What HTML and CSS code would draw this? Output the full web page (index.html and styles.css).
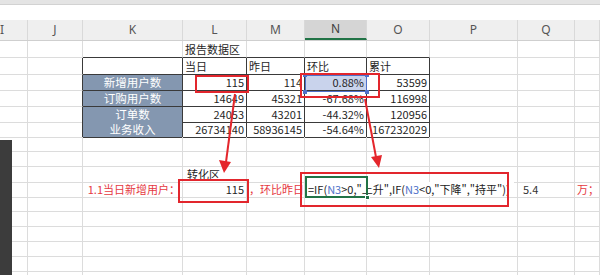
FILE: index.html
```html
<!DOCTYPE html>
<html lang="zh-CN">
<head>
<meta charset="utf-8">
<title>报告数据区</title>
<link rel="stylesheet" href="styles.css">
</head>
<body>
<div class="app">
  <div class="ribbon"></div>
  <div class="fbar"></div>
  <div class="sheet">
    <div class="row hdr">
      <div class="c h hi">I</div><div class="c h">J</div><div class="c h">K</div><div class="c h">L</div><div class="c h">M</div><div class="c h on">N</div><div class="c h">O</div><div class="c h">P</div><div class="c h">Q</div><div class="c h"></div>
    </div>
    <div class="row r17">
      <div class="c"></div><div class="c"></div><div class="c tt"></div><div class="c tt">报告数据区</div><div class="c tt"></div><div class="c tt"></div><div class="c tt"></div><div class="c"></div><div class="c"></div><div class="c"></div>
    </div>
    <div class="row r17">
      <div class="c"></div><div class="c tl"></div><div class="c t"></div><div class="c t">当日</div><div class="c t">昨日</div><div class="c t">环比</div><div class="c t">累计</div><div class="c"></div><div class="c"></div><div class="c"></div>
    </div>
    <div class="row r16">
      <div class="c"></div><div class="c tl"></div><div class="c t lab">新增用户数</div><div class="c t n">115</div><div class="c t n">114</div><div class="c t n sel">0.88%</div><div class="c t n">53599</div><div class="c"></div><div class="c"></div><div class="c"></div>
    </div>
    <div class="row r16">
      <div class="c"></div><div class="c tl"></div><div class="c t lab">订购用户数</div><div class="c t n">14649</div><div class="c t n">45321</div><div class="c t n">-67.68%</div><div class="c t n">116998</div><div class="c"></div><div class="c"></div><div class="c"></div>
    </div>
    <div class="row r15">
      <div class="c"></div><div class="c tl"></div><div class="c t lab">订单数</div><div class="c t n">24053</div><div class="c t n">43201</div><div class="c t n">-44.32%</div><div class="c t n">120956</div><div class="c"></div><div class="c"></div><div class="c"></div>
    </div>
    <div class="row r15">
      <div class="c"></div><div class="c tl"></div><div class="c t lab">业务收入</div><div class="c t n">26734140</div><div class="c t n">58936145</div><div class="c t n">-54.64%</div><div class="c t n">167232029</div><div class="c"></div><div class="c"></div><div class="c"></div>
    </div>
    <div class="row r15">
      <div class="c"></div><div class="c"></div><div class="c"></div><div class="c"></div><div class="c"></div><div class="c"></div><div class="c"></div><div class="c"></div><div class="c"></div><div class="c"></div>
    </div>
    <div class="row r15">
      <div class="c"></div><div class="c"></div><div class="c"></div><div class="c"></div><div class="c"></div><div class="c"></div><div class="c"></div><div class="c"></div><div class="c"></div><div class="c"></div>
    </div>
    <div class="row r15">
      <div class="c"></div><div class="c"></div><div class="c"></div><div class="c zone">转化区</div><div class="c"></div><div class="c"></div><div class="c"></div><div class="c"></div><div class="c"></div><div class="c"></div>
    </div>
    <div class="row r15">
      <div class="c"></div><div class="c"></div><div class="c n red">1.1当日新增用户：</div><div class="c n">115</div><div class="c red clip">，环比昨日</div><div class="c edit"><span class="formula">=IF(<span class="ref">N3</span>&gt;0,"上升",IF(<span class="ref">N3</span>&lt;0,"下降","持平"))</span></div><div class="c"></div><div class="c"></div><div class="c val">5.4</div><div class="c red">万；</div>
    </div>
    <div class="row r15">
      <div class="c"></div><div class="c"></div><div class="c"></div><div class="c"></div><div class="c"></div><div class="c"></div><div class="c"></div><div class="c"></div><div class="c"></div><div class="c"></div>
    </div>
    <div class="row r15">
      <div class="c"></div><div class="c"></div><div class="c"></div><div class="c"></div><div class="c"></div><div class="c"></div><div class="c"></div><div class="c"></div><div class="c"></div><div class="c"></div>
    </div>
    <div class="row r15">
      <div class="c"></div><div class="c"></div><div class="c"></div><div class="c"></div><div class="c"></div><div class="c"></div><div class="c"></div><div class="c"></div><div class="c"></div><div class="c"></div>
    </div>
    <div class="row r15">
      <div class="c"></div><div class="c"></div><div class="c"></div><div class="c"></div><div class="c"></div><div class="c"></div><div class="c"></div><div class="c"></div><div class="c"></div><div class="c"></div>
    </div>
    <div class="row r15">
      <div class="c"></div><div class="c"></div><div class="c"></div><div class="c"></div><div class="c"></div><div class="c"></div><div class="c"></div><div class="c"></div><div class="c"></div><div class="c"></div>
    </div>
    <div class="row r15">
      <div class="c"></div><div class="c"></div><div class="c"></div><div class="c"></div><div class="c"></div><div class="c"></div><div class="c"></div><div class="c"></div><div class="c"></div><div class="c"></div>
    </div>
  </div>

  <div class="dock"></div>

  <div class="refbox"><i class="hd h1"></i><i class="hd h2"></i><i class="hd h3"></i><i class="hd h4"></i></div>
  <div class="active"><i class="fill"></i></div>

  <div class="mark m1"></div>
  <div class="mark m2"></div>
  <div class="mark m3"></div>
  <div class="mark m4"></div>

  <svg class="arrows" width="600" height="275" viewBox="0 0 600 275">
    <line x1="235" y1="94" x2="226" y2="162" stroke="#e4262c" stroke-width="2"/>
    <polygon points="224,173 219,160 231,162" fill="#e4262c"/>
    <line x1="365" y1="99" x2="376" y2="157" stroke="#e4262c" stroke-width="2"/>
    <polygon points="379,168 371,157 382,155" fill="#e4262c"/>
  </svg>
</div>
</body>
</html>
```

FILE: styles.css
```css
* { box-sizing: border-box; }
html, body { margin: 0; padding: 0; background: #fff; }
body {
  font-family: "Noto Sans CJK SC", "Noto Sans", sans-serif;
  color: #1f1f1f;
}
.app {
  position: relative;
  width: 600px;
  height: 275px;
  overflow: hidden;
  background: #fff;
}
.ribbon {
  height: 5px;
  background: #e4e4e4;
  border-bottom: 1px solid #d2d2d2;
}
.fbar {
  height: 15px;
  background: #fff;
}
.row {
  display: grid;
  grid-template-columns: 28px 55px 100px 64px 58px 62px 63px 88px 57px 1fr;
}
.hdr { height: 21px; background: #efefef; border-bottom: 1px solid #cfcfcf; }
.r17 { height: 17px; }
.r16 { height: 16px; }
.r15 { height: 15px; }

.c {
  border-right: 1px solid #dcdcdc;
  border-bottom: 1px solid #dcdcdc;
  padding: 0 2px 1px;
  display: flex;
  align-items: flex-end;
  font-size: 11px;
  line-height: 14px;
  white-space: nowrap;
  min-width: 0;
}
.h {
  border-bottom: none;
  border-right: 1px solid #d9d9d9;
  justify-content: center;
  align-items: center;
  font-family: "Noto Sans", sans-serif;
  font-size: 12px;
  color: #555;
  padding: 0;
}
.h.hi { justify-content: flex-start; padding-left: 0; }
.h.on {
  background: #d5d5d5;
  border-bottom: 2px solid #217346;
  color: #3f3f3f;
}

.tt { border-bottom-color: #3a3a3a; }
.tl { border-right-color: #3a3a3a; }
.t { border-right-color: #3a3a3a; border-bottom-color: #3a3a3a; }
.lab {
  background: #8497b0;
  color: #fff;
  justify-content: center;
  font-size: 11.5px;
}
.n { justify-content: flex-end; }
.sel { background: #c9d3ec; }
.zone { padding-left: 4px; }
.red { color: #e5393f; }
.clip { overflow: hidden; }
.edit { position: relative; z-index: 2; overflow: visible; background: #fff; padding-left: 3px; }
.formula { background: #fff; padding-right: 4px; color: #222; }
.ref { color: #4f72c9; }
.val { color: #333; padding-left: 5px; }

.dock {
  position: absolute;
  left: 0;
  top: 140px;
  width: 12px;
  height: 135px;
  background: #3c3c3c;
}

.refbox {
  position: absolute;
  left: 305px;
  top: 75px;
  width: 62px;
  height: 17px;
  border: 1px solid #4f71c9;
}
.hd {
  position: absolute;
  width: 4px;
  height: 4px;
  background: #4f71c9;
}
.h1 { left: -3px; top: -3px; }
.h2 { right: -3px; top: -3px; }
.h3 { left: -3px; bottom: -3px; }
.h4 { right: -3px; bottom: -3px; }

.active {
  position: absolute;
  left: 305px;
  top: 176px;
  width: 63px;
  height: 22px;
  border: 2px solid #217346;
  z-index: 3;
}
.fill {
  position: absolute;
  right: -4px;
  bottom: -4px;
  width: 5px;
  height: 5px;
  background: #217346;
  border: 1px solid #fff;
}

.mark {
  position: absolute;
  border: 2px solid #e2262d;
  z-index: 4;
}
.m1 { left: 195px; top: 75px; width: 54px; height: 18px; }
.m2 { left: 300px; top: 73px; width: 80px; height: 25px; }
.m3 { left: 178px; top: 179px; width: 71px; height: 24px; }
.m4 { left: 300px; top: 172px; width: 209px; height: 35px; }

.arrows {
  position: absolute;
  left: 0;
  top: 0;
  z-index: 5;
}
```
